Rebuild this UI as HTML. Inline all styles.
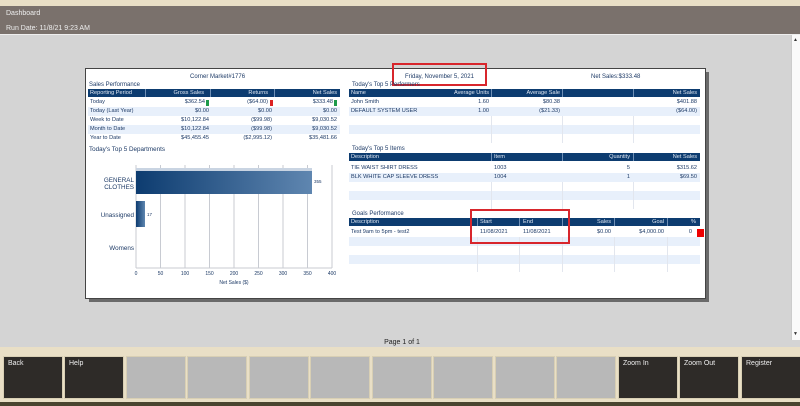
<!DOCTYPE html>
<html><head><meta charset="utf-8"><style>
*{margin:0;padding:0;box-sizing:border-box}
body{width:800px;height:406px;overflow:hidden;background:#e9dfc6;font-family:"Liberation Sans",sans-serif;position:relative}
.a{position:absolute}
.t{position:absolute;font-size:6px;color:#1d3a66;white-space:nowrap;line-height:8px}
.hd{position:absolute;background:#0d3c70;height:8px}
.hd span,.r span{position:absolute;font-size:5.6px;line-height:8px;white-space:nowrap}
.hd span{color:#dfe7f2}
.r{position:absolute;height:9px}
.r span{color:#1d3a66;line-height:9px}
.alt{background:#e8f0fb}
.vl{position:absolute;width:1px;background:#e2e6ee}
.hv{position:absolute;width:1px;background:#6f8fb5;height:8px}
.btn{position:absolute;top:356px;width:60px;height:43px;border:1px solid #d8cfb4;font-size:7px;color:#eee;padding:3px 4px}
.dk{background:#2e2b28}.lg{background:#b8b8b8}
</style></head><body>
<div class="a" style="left:0;top:6px;width:800px;height:28px;background:#7a716c"></div>
<div class="a" style="left:6px;top:10px;font-size:7px;color:#eee">Dashboard</div>
<div class="a" style="left:6px;top:25px;font-size:7px;color:#eee">Run Date: 11/8/21 9:23 AM</div>
<div class="a" style="left:0;top:34px;width:800px;height:1px;background:#eee"></div>
<div class="a" style="left:0;top:35px;width:800px;height:312px;background:#d4d4d4"></div>
<div class="a" style="left:791px;top:35px;width:9px;height:305px;background:#fafafa;border-left:1px solid #ccc"></div>
<div class="a" style="left:793px;top:37px;font-size:5px;color:#333">▲</div>
<div class="a" style="left:793px;top:331px;font-size:5px;color:#333">▼</div>
<div class="a" style="left:89px;top:72px;width:620px;height:230px;background:#6a6a6a"></div>
<div class="a" style="left:85px;top:68px;width:621px;height:231px;background:#fff;border:1px solid #444"></div>

<div class="t" style="left:190px;top:73px">Corner Market#1776</div>
<div class="t" style="left:89px;top:81px">Sales Performance</div>
<div class="hd" style="left:88px;top:89px;width:252px">
<span style="left:2px">Reporting Period</span><span style="right:136px">Gross Sales</span><span style="right:72px">Returns</span><span style="right:3px">Net Sales</span></div>
<div class="hv" style="left:145px;top:89px"></div><div class="hv" style="left:210px;top:89px"></div><div class="hv" style="left:274px;top:89px"></div>
<div class="r" style="left:88px;top:98px;width:252px"><span style="left:2px">Today</span><span style="right:135px">$362.54</span><span style="right:72px">($64.00)</span><span style="right:7px">$333.48</span></div>
<div class="a" style="left:206px;top:100px;width:3px;height:6px;background:#1e9a4a"></div>
<div class="a" style="left:270px;top:100px;width:3px;height:6px;background:#d22"></div>
<div class="a" style="left:334px;top:100px;width:3px;height:6px;background:#1e9a4a"></div>
<div class="r alt" style="left:88px;top:107px;width:252px"><span style="left:2px">Today (Last Year)</span><span style="right:131px">$0.00</span><span style="right:68px">$0.00</span><span style="right:3px">$0.00</span></div>
<div class="r" style="left:88px;top:116px;width:252px"><span style="left:2px">Week to Date</span><span style="right:131px">$10,122.84</span><span style="right:68px">($99.98)</span><span style="right:3px">$9,030.52</span></div>
<div class="r alt" style="left:88px;top:125px;width:252px"><span style="left:2px">Month to Date</span><span style="right:131px">$10,122.84</span><span style="right:68px">($99.98)</span><span style="right:3px">$9,030.52</span></div>
<div class="r" style="left:88px;top:134px;width:252px"><span style="left:2px">Year to Date</span><span style="right:131px">$45,455.45</span><span style="right:68px">($2,995.12)</span><span style="right:3px">$35,481.66</span></div>
<div class="t" style="left:89px;top:146px;font-size:6.3px">Today's Top 5 Departments</div>

<svg class="a" style="left:85px;top:155px" width="260" height="135">
<defs><linearGradient id="g" x1="0" x2="1"><stop offset="0" stop-color="#0d3c70"/><stop offset="1" stop-color="#5f86b0"/></linearGradient></defs>
<g stroke="#c8cbd2" stroke-width="1"><line x1="51" y1="10" x2="51" y2="113"/><line x1="75.5" y1="10" x2="75.5" y2="113"/><line x1="100" y1="10" x2="100" y2="113"/><line x1="124.5" y1="10" x2="124.5" y2="113"/><line x1="149" y1="10" x2="149" y2="113"/><line x1="173.5" y1="10" x2="173.5" y2="113"/><line x1="198" y1="10" x2="198" y2="113"/><line x1="222.5" y1="10" x2="222.5" y2="113"/><line x1="247" y1="10" x2="247" y2="113"/><line x1="51" y1="113" x2="247" y2="113"/></g>
<rect x="51" y="13" width="176" height="4" fill="#c9d4e2"/>
<rect x="51" y="16" width="176" height="23" fill="url(#g)"/>
<rect x="51" y="46" width="9" height="26" fill="url(#g)"/>
<g font-family="Liberation Sans" font-size="6.3" fill="#1d3a66" text-anchor="end">
<text x="49" y="27">GENERAL</text><text x="49" y="34">CLOTHES</text><text x="49" y="62">Unassigned</text><text x="49" y="95">Womens</text></g>
<g font-family="Liberation Sans" font-size="4.5" fill="#1d3a66"><text x="229" y="28">355</text><text x="62" y="61">17</text></g>
<g font-family="Liberation Sans" font-size="5" fill="#1d3a66" text-anchor="middle"><text x="51" y="120">0</text><text x="75.5" y="120">50</text><text x="100" y="120">100</text><text x="124.5" y="120">150</text><text x="149" y="120">200</text><text x="173.5" y="120">250</text><text x="198" y="120">300</text><text x="222.5" y="120">350</text><text x="247" y="120">400</text><text x="149" y="129">Net Sales ($)</text></g>
</svg>

<div class="t" style="left:405px;top:73px">Friday, November 5, 2021</div>
<div class="a" style="left:392px;top:63px;width:95px;height:23px;border:2px solid #d8262c"></div>
<div class="t" style="left:591px;top:73px">Net Sales:$333.48</div>
<div class="t" style="left:352px;top:81px">Today's Top 5 Performers</div>
<div class="hd" style="left:349px;top:89px;width:351px"><span style="left:2px">Name</span><span style="right:211px">Average Units</span><span style="right:140px">Average Sale</span><span style="right:3px">Net Sales</span></div>
<div class="hv" style="left:491px;top:89px"></div><div class="hv" style="left:562px;top:89px"></div><div class="hv" style="left:633px;top:89px"></div>
<div class="r" style="left:349px;top:98px;width:351px"><span style="left:2px">John Smith</span><span style="right:211px">1.60</span><span style="right:140px">$80.38</span><span style="right:3px">$401.88</span></div>
<div class="r alt" style="left:349px;top:107px;width:351px"><span style="left:2px">DEFAULT SYSTEM USER</span><span style="right:211px">1.00</span><span style="right:140px">($21.33)</span><span style="right:3px">($64.00)</span></div>
<div class="r" style="left:349px;top:116px;width:351px"></div>
<div class="r alt" style="left:349px;top:125px;width:351px"></div>
<div class="vl" style="left:491px;top:116px;height:27px"></div><div class="vl" style="left:562px;top:116px;height:27px"></div><div class="vl" style="left:633px;top:116px;height:27px"></div>

<div class="t" style="left:352px;top:145px">Today's Top 5 Items</div>
<div class="hd" style="left:349px;top:153px;width:351px"><span style="left:2px">Description</span><span style="left:145px">Item</span><span style="right:70px">Quantity</span><span style="right:3px">Net Sales</span></div>
<div class="hv" style="left:491px;top:153px"></div><div class="hv" style="left:562px;top:153px"></div><div class="hv" style="left:633px;top:153px"></div>
<div class="r" style="left:349px;top:164px;width:351px"><span style="left:2px">TIE WAIST SHIRT DRESS</span><span style="left:145px">1003</span><span style="right:70px">5</span><span style="right:3px">$315.62</span></div>
<div class="r alt" style="left:349px;top:173px;width:351px"><span style="left:2px">BLK WHITE CAP SLEEVE DRESS</span><span style="left:145px">1004</span><span style="right:70px">1</span><span style="right:3px">$69.50</span></div>
<div class="r" style="left:349px;top:182px;width:351px"></div>
<div class="r alt" style="left:349px;top:191px;width:351px"></div>
<div class="vl" style="left:491px;top:182px;height:27px"></div><div class="vl" style="left:562px;top:182px;height:27px"></div><div class="vl" style="left:633px;top:182px;height:27px"></div>

<div class="t" style="left:352px;top:210px">Goals Performance</div>
<div class="hd" style="left:349px;top:218px;width:351px"><span style="left:2px">Description</span><span style="left:131px">Start</span><span style="left:174px">End</span><span style="right:89px">Sales</span><span style="right:36px">Goal</span><span style="right:4px">%</span></div>
<div class="hv" style="left:477px;top:218px"></div><div class="hv" style="left:519px;top:218px"></div><div class="hv" style="left:562px;top:218px"></div><div class="hv" style="left:614px;top:218px"></div><div class="hv" style="left:667px;top:218px"></div>
<div class="r" style="left:349px;top:228px;width:351px"><span style="left:2px">Test 9am to 5pm - test2</span><span style="left:131px">11/08/2021</span><span style="left:174px">11/08/2021</span><span style="right:89px">$0.00</span><span style="right:36px">$4,000.00</span><span style="right:8px">0</span></div>
<div class="a" style="left:697px;top:229px;width:7px;height:8px;background:#e00"></div>
<div class="r alt" style="left:349px;top:237px;width:351px"></div>
<div class="r" style="left:349px;top:246px;width:351px"></div>
<div class="r alt" style="left:349px;top:255px;width:351px"></div>
<div class="vl" style="left:477px;top:237px;height:35px"></div><div class="vl" style="left:519px;top:237px;height:35px"></div><div class="vl" style="left:562px;top:237px;height:35px"></div><div class="vl" style="left:614px;top:237px;height:35px"></div><div class="vl" style="left:667px;top:237px;height:35px"></div>
<div class="a" style="left:470px;top:209px;width:100px;height:35px;border:2px solid #d8262c"></div>

<div class="a" style="left:0;top:339px;width:800px;text-align:center;font-size:7px;color:#222;padding-left:4px">Page 1 of 1</div>

<div class="btn dk" style="left:3px">Back</div>
<div class="btn dk" style="left:64px">Help</div>
<div class="btn lg" style="left:126px"></div>
<div class="btn lg" style="left:187px"></div>
<div class="btn lg" style="left:249px"></div>
<div class="btn lg" style="left:310px"></div>
<div class="btn lg" style="left:372px"></div>
<div class="btn lg" style="left:433px"></div>
<div class="btn lg" style="left:495px"></div>
<div class="btn lg" style="left:556px"></div>
<div class="btn dk" style="left:618px">Zoom In</div>
<div class="btn dk" style="left:679px">Zoom Out</div>
<div class="btn dk" style="left:741px">Register</div>
<div class="a" style="left:0;top:402px;width:800px;height:4px;background:#4a4530"></div>
</body></html>
